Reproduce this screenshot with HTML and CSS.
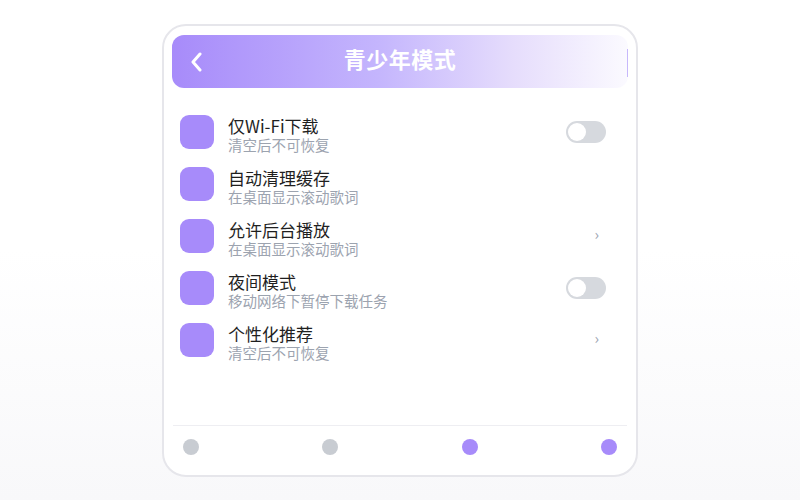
FILE: index.html
```html
<!DOCTYPE html>
<html lang="zh-CN">
<head>
  <meta charset="UTF-8">
  <title>青少年模式</title>
  <meta name="viewport" content="width=device-width, initial-scale=1.0">
  <link rel="stylesheet" href="styles.css">
</head>
<body>
  <div class="phone">
    <div class="header">
      <span class="back">
        <svg width="14" height="20" viewBox="0 0 14 20"><path d="M10 2 L3 10 L10 18" fill="none" stroke="#fff" stroke-width="3" stroke-linecap="round" stroke-linejoin="round"/></svg>
      </span>
      <h1>青少年模式</h1>
    </div>

    <div class="list">
      <div class="row">
        <div class="icon"></div>
        <div class="text">
          <div class="title">仅Wi-Fi下载</div>
          <div class="sub">清空后不可恢复</div>
        </div>
        <div class="toggle"></div>
      </div>
      <div class="row">
        <div class="icon"></div>
        <div class="text">
          <div class="title">自动清理缓存</div>
          <div class="sub">在桌面显示滚动歌词</div>
        </div>
      </div>
      <div class="row">
        <div class="icon"></div>
        <div class="text">
          <div class="title">允许后台播放</div>
          <div class="sub">在桌面显示滚动歌词</div>
        </div>
        <div class="arrow">›</div>
      </div>
      <div class="row">
        <div class="icon"></div>
        <div class="text">
          <div class="title">夜间模式</div>
          <div class="sub">移动网络下暂停下载任务</div>
        </div>
        <div class="toggle"></div>
      </div>
      <div class="row">
        <div class="icon"></div>
        <div class="text">
          <div class="title">个性化推荐</div>
          <div class="sub">清空后不可恢复</div>
        </div>
        <div class="arrow">›</div>
      </div>
    </div>

    <div class="dots">
      <span class="dot"></span>
      <span class="dot"></span>
      <span class="dot on"></span>
      <span class="dot on"></span>
    </div>
  </div>
</body>
</html>
```

FILE: styles.css
```css
html, body {
  margin: 0;
  height: 100%;
}
body {
  background: linear-gradient(to bottom, #ffffff 50%, #f8f8fa 100%);
  font-family: "Noto Sans CJK SC", "Noto Sans", sans-serif;
  color: #1f1f1f;
  padding-top: 24px;
  box-sizing: border-box;
}
.phone {
  width: 476px;
  height: 453px;
  margin: 0 auto;
  box-sizing: border-box;
  border: 2px solid #e6e6eb;
  border-radius: 24px;
  background: #fff;
  padding: 9px 8px 0 8px;
  display: flex;
  flex-direction: column;
}
.header {
  position: relative;
  height: 53px;
  border-radius: 12px;
  background: linear-gradient(to right, #a78bfa 0%, #c4b5fd 45%, #e6ddfc 75%, #fbfaff 100%);
  display: flex;
  align-items: center;
  justify-content: center;
}
.header::after {
  content: "";
  position: absolute;
  right: 0;
  top: 14px;
  bottom: 11px;
  width: 1px;
  background: #c7b8fb;
}
.back {
  position: absolute;
  left: 18px;
  top: 17px;
  display: flex;
}
.header h1 {
  margin: 0 0 8px 0;
  line-height: 26px;
  color: #fff;
  font-size: 22px;
  font-weight: 700;
  letter-spacing: 0.5px;
}
.list {
  flex: 1;
  padding: 18px 0 0 8px;
}
.row {
  display: flex;
  align-items: flex-start;
  height: 52px;
}
.icon {
  width: 34px;
  height: 34px;
  border-radius: 9px;
  background: #a78bfa;
  flex-shrink: 0;
  margin-top: 9px;
}
.text {
  flex: 1;
  margin-left: 14px;
  padding-top: 9px;
}
.title {
  font-size: 17px;
  line-height: 21px;
}
.sub {
  font-size: 14.5px;
  line-height: 18px;
  color: #9ca3af;
}
.toggle {
  position: relative;
  width: 40px;
  height: 22px;
  border-radius: 11px;
  background: #d6d9de;
  margin: 15px 22px 0 0;
}
.toggle::before {
  content: "";
  position: absolute;
  left: 2px;
  top: 2px;
  width: 18px;
  height: 18px;
  border-radius: 50%;
  background: #fff;
}
.arrow {
  color: #9ca3af;
  font-size: 15px;
  line-height: 20px;
  margin: 14px 29px 0 0;
}
.dots {
  border-top: 1px solid #eeeef2;
  margin: 0 1px 0 1px;
  padding: 13px 10px 20px 10px;
  display: flex;
  justify-content: space-between;
}
.dot {
  width: 16px;
  height: 16px;
  border-radius: 50%;
  background: #c8ccd2;
}
.dot.on {
  background: #a78bfa;
}
```
